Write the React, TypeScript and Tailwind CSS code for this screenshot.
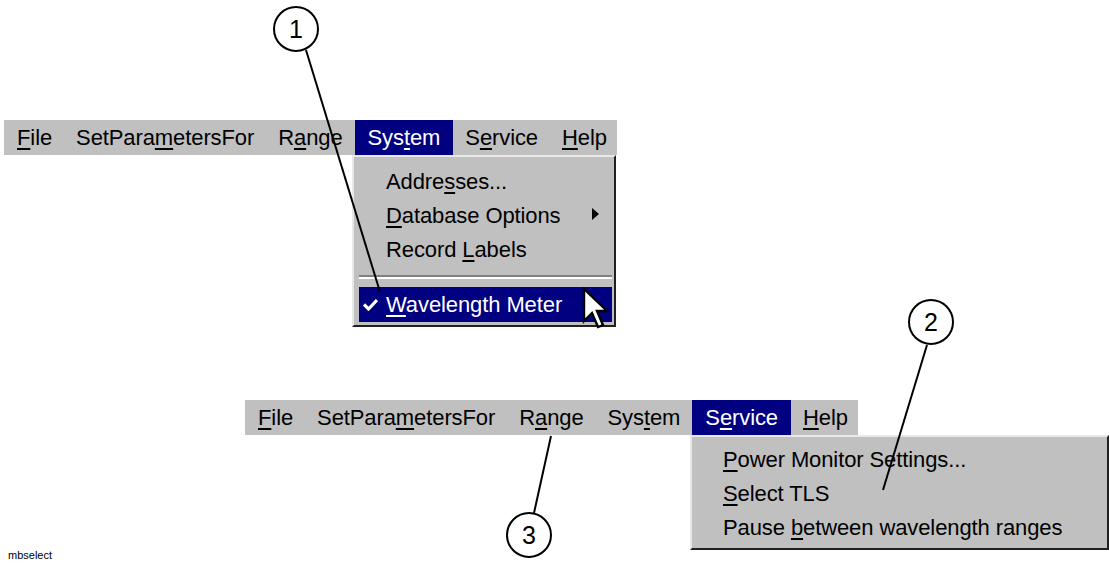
import React from 'react';

const font = "font-['Liberation_Sans',Arial,sans-serif]";

// label with the mnemonic letter underlined
const Mn = ({ t, i }: { t: string; i: number }) => (
  <span className="whitespace-pre">
    {t.slice(0, i)}
    <span className="underline decoration-2 underline-offset-[3px]">{t[i]}</span>
    {t.slice(i + 1)}
  </span>
);

type Item = { t: string; i: number };

const barItems: Item[] = [
  { t: 'File', i: 0 },
  { t: 'SetParametersFor', i: 7 },
  { t: 'Range', i: 1 },
  { t: 'System', i: 3 },
  { t: 'Service', i: 1 },
  { t: 'Help', i: 0 },
];

const MenuBar = ({ active }: { active: string }) => (
  <div className="flex h-[35px] w-[613px] items-stretch bg-[#c0c0c0] pl-[1px] text-black">
    {barItems.map((it) => (
      <div
        key={it.t}
        className={
          it.t === active
            ? 'flex items-center bg-[#000080] px-[13px] text-white'
            : 'flex items-center px-[12px]'
        }
      >
        <Mn t={it.t} i={it.i} />
      </div>
    ))}
  </div>
);

const Check = () => (
  <svg width="15" height="13" viewBox="0 0 15 13" className="absolute left-[4px] top-[11px]">
    <path d="M1 6.5 L5.5 11 L14 2" stroke="white" strokeWidth="3.2" fill="none" />
  </svg>
);

const Cursor = () => (
  <svg
    width="30"
    height="44"
    viewBox="0 0 15 22"
    className="absolute left-[582px] top-[287px] z-10"
  >
    <path
      d="M1 1 L1 17 L5 13 L8 20 L10.5 19 L7.5 12 L12.5 12 Z"
      fill="white"
      stroke="black"
      strokeWidth="1.2"
      strokeLinejoin="miter"
    />
  </svg>
);

const Callout = ({ n, x, y }: { n: number; x: number; y: number }) => (
  <div
    className="absolute z-20 flex h-[46px] w-[46px] items-center justify-center rounded-full border-[2.5px] border-black bg-white text-[25px] leading-none tracking-normal text-black"
    style={{ left: x - 23, top: y - 23 }}
  >
    {n}
  </div>
);

export default function App() {
  return (
    <div className={`relative h-[564px] w-[1109px] overflow-hidden bg-white ${font} text-[22px] tracking-[-0.1px]`}>
      {/* first menu: System open */}
      <div className="absolute left-[4px] top-[120px]">
        <MenuBar active="System" />
      </div>
      <div className="absolute left-[352px] top-[155px] w-[264px] border-2 border-t-[#e8e8e8] border-l-[#e8e8e8] border-r-[#202020] border-b-[#202020] bg-[#c0c0c0] pb-[3px] pl-[5px] pr-[2px] pt-[7px] text-black">
        <div className="flex h-[34px] items-center pl-[27px]">
          <Mn t="Addresses..." i={5} />
        </div>
        <div className="relative flex h-[34px] items-center pl-[27px]">
          <Mn t="Database Options" i={0} />
          <svg width="7" height="12" viewBox="0 0 7 12" className="absolute left-[233px] top-[10px]">
            <path d="M0 0 L7 6 L0 12 Z" fill="black" />
          </svg>
        </div>
        <div className="flex h-[34px] items-center pl-[27px]">
          <Mn t="Record Labels" i={7} />
        </div>
        <div className="flex h-[21px] flex-col justify-center">
          <div className="h-[2px] bg-[#808080]" />
          <div className="h-[2px] bg-white" />
        </div>
        <div className="relative flex h-[35px] items-center bg-[#000080] pl-[27px] text-white">
          <Check />
          <Mn t="Wavelength Meter" i={0} />
        </div>
      </div>
      <Cursor />

      {/* second menu: Service open */}
      <div className="absolute left-[245px] top-[400px]">
        <MenuBar active="Service" />
      </div>
      <div className="absolute left-[690px] top-[435px] w-[419px] border-2 border-t-[#e8e8e8] border-l-[#e8e8e8] border-r-[#202020] border-b-[#202020] bg-[#c0c0c0] pb-[4px] pl-[5px] pr-[2px] pt-[5px] text-black">
        <div className="flex h-[34px] items-center pl-[26px]">
          <Mn t="Power Monitor Settings..." i={0} />
        </div>
        <div className="flex h-[34px] items-center pl-[26px]">
          <Mn t="Select TLS" i={0} />
        </div>
        <div className="flex h-[34px] items-center pl-[26px]">
          <Mn t="Pause between wavelength ranges" i={6} />
        </div>
      </div>

      {/* callout leaders */}
      <svg width="1109" height="564" className="pointer-events-none absolute left-0 top-0 z-10">
        <line x1="306" y1="50" x2="380" y2="292" stroke="black" strokeWidth="2" />
        <line x1="927" y1="345" x2="883" y2="490" stroke="black" strokeWidth="2" />
        <line x1="534" y1="513" x2="551" y2="436" stroke="black" strokeWidth="2" />
      </svg>
      <Callout n={1} x={296} y={29} />
      <Callout n={2} x={931} y={322} />
      <Callout n={3} x={529} y={535} />

      <div className="absolute left-[8px] top-[547px] text-[11px] tracking-normal text-black">mbselect</div>
    </div>
  );
}
